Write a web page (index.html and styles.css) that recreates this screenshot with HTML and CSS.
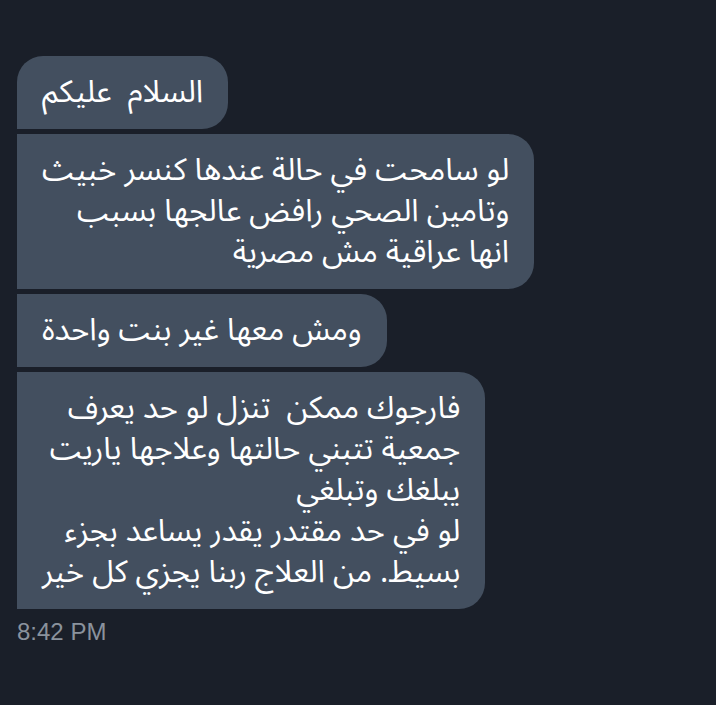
FILE: index.html
```html
<!DOCTYPE html>
<html lang="ar">
<head>
<meta charset="utf-8">
<link rel="stylesheet" href="styles.css">
</head>
<body>
<div class="chat">
  <div class="group">
    <div class="bubble first" dir="rtl">السلام  عليكم</div>
    <div class="bubble" dir="rtl">لو سامحت في حالة عندها كنسر خبيث<br>وتامين الصحي رافض عالجها بسبب<br>انها عراقية مش مصرية</div>
    <div class="bubble" dir="rtl">ومش معها غير بنت واحدة</div>
    <div class="bubble" dir="rtl">فارجوك ممكن&nbsp; تنزل لو حد يعرف<br>جمعية تتبني حالتها وعلاجها ياريت<br>يبلغك وتبلغي<br>لو في حد مقتدر يقدر يساعد بجزء<br>بسيط. من العلاج ربنا يجزي كل خير</div>
  </div>
  <div class="time">8:42 PM</div>
</div>
</body>
</html>
```
FILE: styles.css
```css
html, body {
  margin: 0;
  padding: 0;
  background: #1a1f29;
  height: 100%;
}
.chat {
  padding: 56px 0 0 17px;
}
.group {
  display: flex;
  flex-direction: column;
  align-items: flex-start;
  gap: 5px;
}
.bubble {
  background: #434f5f;
  color: #ffffff;
  font-family: "Noto Sans Arabic", "DejaVu Sans", sans-serif;
  font-size: 31px;
  line-height: 41px;
  padding: 16px 25px;
  border-radius: 0 26px 26px 0;
  text-align: right;
  white-space: pre-wrap;
}
.bubble.first {
  border-top-left-radius: 26px;
}
.time {
  margin-top: 10px;
  font-family: "Liberation Sans", Arial, sans-serif;
  font-size: 24px;
  color: #8a929d;
  line-height: 26px;
}
```
